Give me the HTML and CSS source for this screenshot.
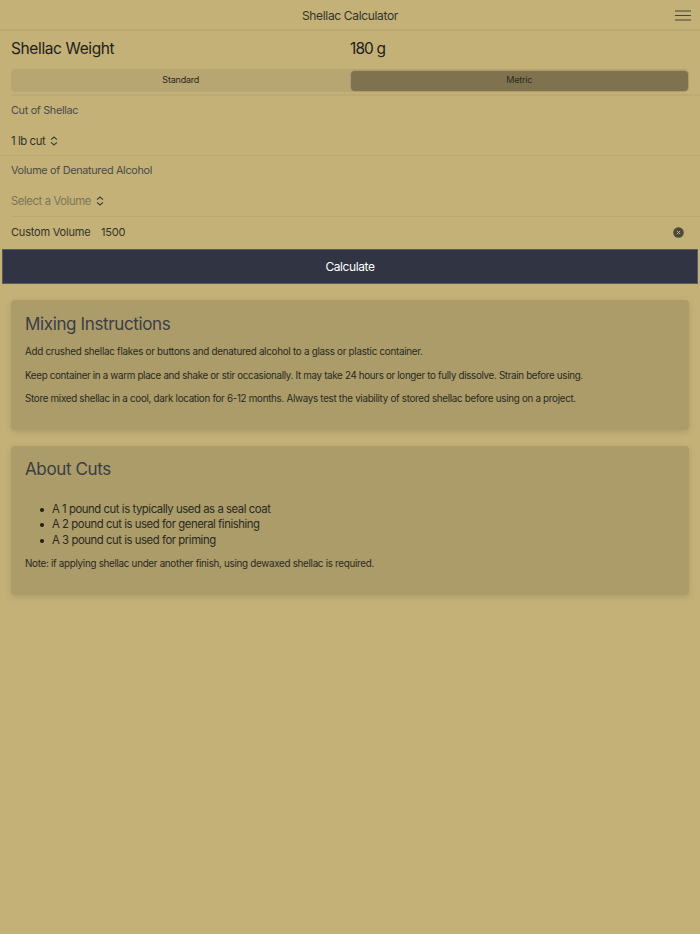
FILE: index.html
```html
<!DOCTYPE html>
<html lang="en">
<head>
<meta charset="utf-8">
<title>Shellac Calculator</title>
<link rel="stylesheet" href="styles.css">
</head>
<body>
<header class="toolbar">
  <h1 class="toolbar-title">Shellac Calculator</h1>
  <button class="menu" aria-label="Menu"><svg width="16" height="11" viewBox="0 0 16 11"><path d="M0 1h16M0 5.5h16M0 10h16" stroke="#45453c" stroke-width="1" fill="none"/></svg></button>
</header>
<main>
  <section class="weight">
    <div class="weight-col">Shellac Weight</div>
    <div class="weight-col weight-value">180 g</div>
  </section>
  <div class="segment-row">
    <div class="segment">
      <button class="seg-btn">Standard</button>
      <button class="seg-btn active">Metric</button>
    </div>
  </div>
  <div class="item">
    <div class="label">Cut of Shellac</div>
    <div class="select"><span>1 lb cut</span><svg class="updown" width="8" height="10" viewBox="0 0 8 10"><path d="M1 3.6 4 1 7 3.6M1 6.4 4 9 7 6.4" stroke="#3c3c34" stroke-width="1.1" fill="none"/></svg></div>
  </div>
  <div class="item">
    <div class="label">Volume of Denatured Alcohol</div>
    <div class="select placeholder"><span>Select a Volume</span><svg class="updown" width="8" height="10" viewBox="0 0 8 10"><path d="M1 3.6 4 1 7 3.6M1 6.4 4 9 7 6.4" stroke="#3c3c34" stroke-width="1.1" fill="none"/></svg></div>
  </div>
  <div class="custom">
    <span class="custom-label">Custom Volume</span>
    <span class="custom-value">1500</span>
    <svg class="clear" width="11" height="11" viewBox="0 0 11 11"><circle cx="5.5" cy="5.5" r="5.3" fill="#4d4a3a"/><path d="M3.9 3.9 7.1 7.1M7.1 3.9 3.9 7.1" stroke="#c4b178" stroke-width="1"/></svg>
  </div>
  <button class="calc">Calculate</button>
  <section class="card mixing">
    <h2>Mixing Instructions</h2>
    <p>Add crushed shellac flakes or buttons and denatured alcohol to a glass or plastic container.</p>
    <p>Keep container in a warm place and shake or stir occasionally. It may take 24 hours or longer to fully dissolve. Strain before using.</p>
    <p>Store mixed shellac in a cool, dark location for 6-12 months. Always test the viability of stored shellac before using on a project.</p>
  </section>
  <section class="card cuts">
    <h2>About Cuts</h2>
    <ul>
      <li>A 1 pound cut is typically used as a seal coat</li>
      <li>A 2 pound cut is used for general finishing</li>
      <li>A 3 pound cut is used for priming</li>
    </ul>
    <p>Note: if applying shellac under another finish, using dewaxed shellac is required.</p>
  </section>
</main>
</body>
</html>
```
FILE: styles.css
```css
* { box-sizing: border-box; }
html, body { margin: 0; height: 100%; }
body {
  background: #c4b178;
  color: #22211a;
  font-family: "Inter", "Liberation Sans", sans-serif;
  overflow: hidden;
}
button { font-family: inherit; border: 0; padding: 0; background: none; }
.toolbar {
  height: 31px;
  padding-top: 2px;
  border-bottom: 2px solid #baa871;
  display: flex;
  align-items: center;
  justify-content: center;
  position: relative;
}
.toolbar-title { margin: 0; font-size: 12px; font-weight: 400; letter-spacing: -.34px; color: #33322a; }
.menu { position: absolute; right: 9px; top: 10px; width: 16px; height: 11px; display: flex; }
.weight { display: flex; height: 35px; align-items: center; padding-left: 11px; font-size: 15.5px; letter-spacing: -.38px; color: #22211a; }
.weight-col { width: 339px; }
.weight-value { letter-spacing: -.9px; }
.segment-row { padding: 3px 11px 2px 0; border-bottom: 2px solid #bcaa73; margin-left: 11px; }
.segment { display: flex; gap: 1px; height: 23px; background: #b7a672; border-radius: 5px; padding: 1.5px 1px; }
.seg-btn { flex: 1; font-size: 9px; letter-spacing: -.2px; color: #2a2920; border-radius: 4px; padding-bottom: 2px; }
.seg-btn.active { background: #7e734e; box-shadow: 0 0 2px #8d8258; }
.item { padding-left: 11px; }
.item + .item { border-top: 1px solid #b9a872; height: 61px; }
.label { height: 28px; display: flex; align-items: center; font-size: 10.8px; letter-spacing: -.3px; color: #4a4a48; }
.select { height: 31px; padding-top: 2px; display: flex; align-items: center; gap: 5px; font-size: 11.3px; letter-spacing: -.4px; color: #33322a; }
.select.placeholder { color: #7c7559; padding-top: 3px; }
.custom { height: 33px; padding: 0 16px 2px 0; border-top: 1px solid #b9a872; margin-left: 11px; display: flex; align-items: center; font-size: 11px; letter-spacing: -.2px; color: #33322a; }
.custom-label { width: 90px; }
.custom-value { flex: 1; }
.calc { display: block; width: 696px; height: 35px; margin: 0 2px; background: #303443; color: #fff; font-size: 12px; letter-spacing: -.4px; border: 1px solid #565a5c; }
.card {
  margin: 16px 11px 0;
  background: #ab9c69;
  border-radius: 4px;
  box-shadow: 0 2px 6px rgba(90, 80, 40, .22);
  padding: 14px;
  color: #2a291f;
}
.card h2 { margin: 0; font-size: 17px; font-weight: 400; letter-spacing: -.37px; color: #3b3d44; line-height: 20px; }
.card p { margin: 0; font-size: 9.8px; letter-spacing: -.26px; line-height: 14px; }
.mixing { height: 130px; }
.mixing h2 { margin-bottom: 11px; }
.mixing p + p { margin-top: 9.5px; }
.mixing p:nth-of-type(2) { letter-spacing: -.325px; }
.mixing p:nth-of-type(3) { letter-spacing: -.29px; }
.cuts { height: 149px; }
.cuts h2 { margin-top: -1px; }
.cuts ul { list-style: none; margin: 23px 0 0; padding: 0 0 0 15px; font-size: 11.3px; letter-spacing: -.43px; line-height: 15.4px; }
.cuts li { display: flex; align-items: center; gap: 8px; }
.cuts li::before { content: ""; width: 4px; height: 4px; border-radius: 50%; background: #1e1d16; }
.cuts p { margin-top: 9px; letter-spacing: -.285px; }
```
